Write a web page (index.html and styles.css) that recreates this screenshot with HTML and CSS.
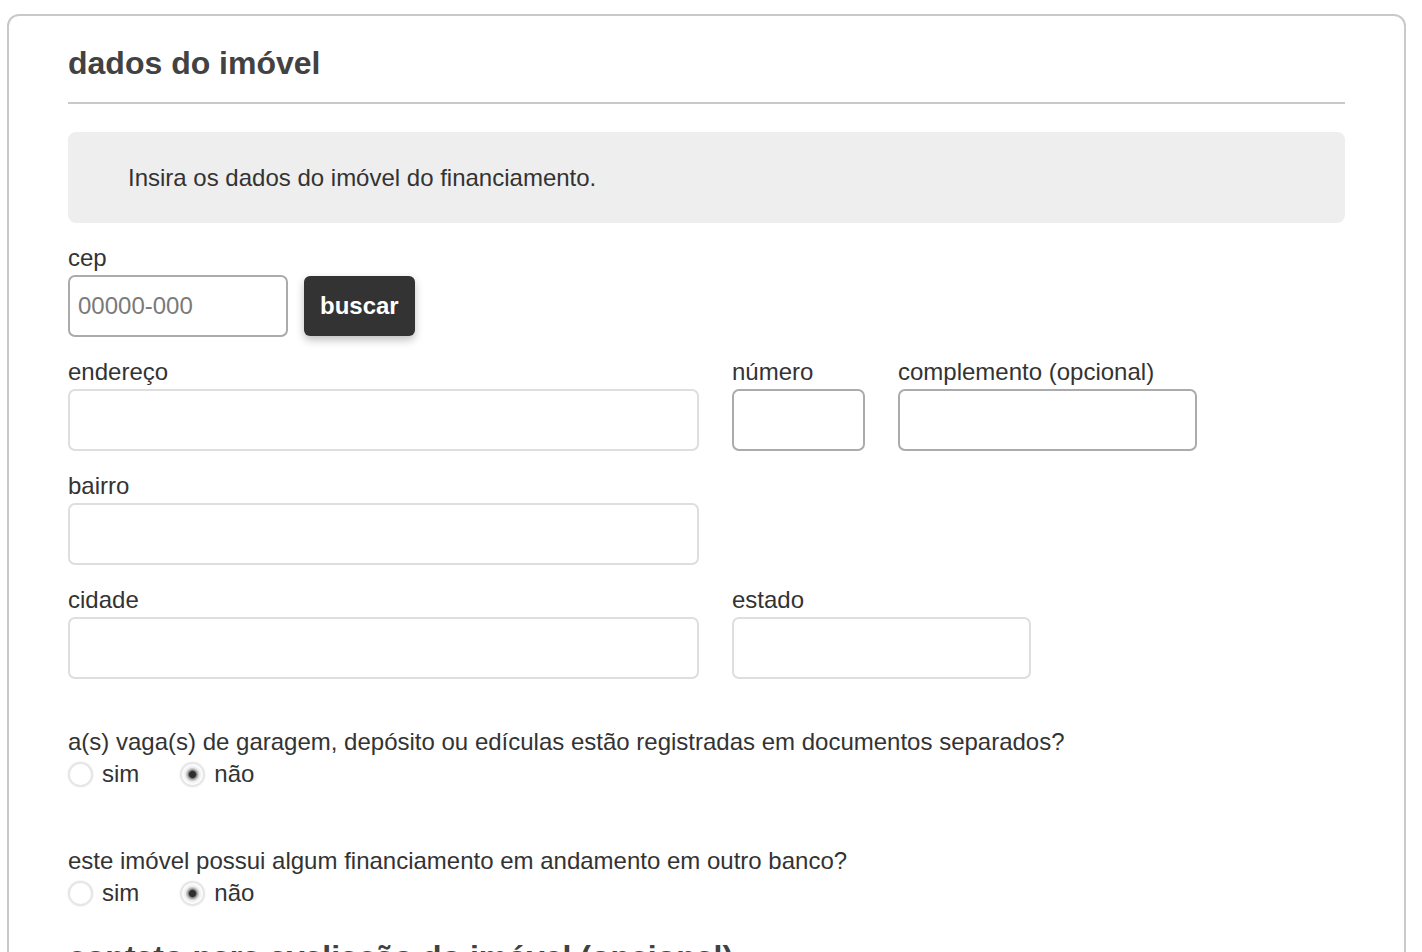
FILE: index.html
```html
<!DOCTYPE html>
<html lang="pt-BR">
<head>
<meta charset="utf-8">
<title>dados do imóvel</title>
<link rel="stylesheet" href="styles.css">
</head>
<body>
<div class="card">
  <h2 class="title">dados do imóvel</h2>
  <hr class="rule">
  <div class="info">Insira os dados do imóvel do financiamento.</div>

  <div class="fields">
    <div class="field">
      <label class="label" for="cep">cep</label>
      <div class="cep-row">
        <input id="cep" class="input input-dark w-cep" type="text" placeholder="00000-000">
        <button class="btn" type="button">buscar</button>
      </div>
    </div>

    <div class="row">
      <div class="field">
        <label class="label">endereço</label>
        <input class="input w-wide" type="text" disabled>
      </div>
      <div class="field">
        <label class="label">número</label>
        <input class="input input-dark w-num" type="text">
      </div>
      <div class="field">
        <label class="label">complemento (opcional)</label>
        <input class="input input-dark w-comp" type="text">
      </div>
    </div>

    <div class="row">
      <div class="field">
        <label class="label">bairro</label>
        <input class="input w-wide" type="text" disabled>
      </div>
    </div>

    <div class="row">
      <div class="field">
        <label class="label">cidade</label>
        <input class="input w-wide" type="text" disabled>
      </div>
      <div class="field">
        <label class="label">estado</label>
        <input class="input w-comp" type="text" disabled>
      </div>
    </div>
  </div>

  <div class="questions">
    <div class="question">
      <p class="q-text">a(s) vaga(s) de garagem, depósito ou edículas estão registradas em documentos separados?</p>
      <div class="radios">
        <label class="radio"><input type="radio" name="q1"><span>sim</span></label>
        <label class="radio"><input type="radio" name="q1" checked><span>não</span></label>
      </div>
    </div>
    <div class="question">
      <p class="q-text">este imóvel possui algum financiamento em andamento em outro banco?</p>
      <div class="radios">
        <label class="radio"><input type="radio" name="q2"><span>sim</span></label>
        <label class="radio"><input type="radio" name="q2" checked><span>não</span></label>
      </div>
    </div>
  </div>

  <h2 class="title title-next">contato para avaliação do imóvel (opcional)</h2>
</div>
</body>
</html>
```

FILE: styles.css
```css
* { box-sizing: border-box; }

html, body {
  margin: 0;
  padding: 0;
  background: #fff;
  overflow: hidden;
  height: 952px;
}

body {
  font-family: "Liberation Sans", Arial, Helvetica, sans-serif;
  color: #333;
}

.card {
  margin: 14px 16px 0 7px;
  border: 2px solid #c9c9c9;
  border-radius: 12px;
  padding: 29px 59px 40px 59px;
  height: 1100px;
}

.title {
  margin: 0;
  font-size: 32px;
  line-height: 37px;
  font-weight: 700;
  color: #424242;
}

.rule {
  margin: 20px 0 0 0;
  border: 0;
  height: 2px;
  background: #c9c9c9;
}

.info {
  margin-top: 28px;
  height: 91px;
  background: #eeeeee;
  border-radius: 8px;
  padding-left: 60px;
  display: flex;
  align-items: center;
  font-size: 24px;
  color: #333;
}

.fields {
  margin-top: 22px;
  display: flex;
  flex-direction: column;
  gap: 22px;
}

.row {
  display: flex;
  gap: 33px;
}

.field {
  display: flex;
  flex-direction: column;
}

.label {
  font-size: 24px;
  line-height: 26px;
  margin-bottom: 4px;
  color: #333;
}

.cep-row {
  display: flex;
  align-items: center;
  gap: 16px;
}

.input {
  height: 62px;
  border: 2px solid #dedede;
  border-radius: 7px;
  background: #fff;
  padding: 0 8px;
  font-family: "Liberation Sans", Arial, Helvetica, sans-serif;
  font-size: 24px;
  color: #333;
  outline: none;
}

.input-dark {
  border-color: #ababab;
}

.input::placeholder {
  color: #7a7a7a;
}

.w-cep { width: 220px; }
.w-wide { width: 631px; }
.w-num { width: 133px; }
.w-comp { width: 299px; }

.btn {
  height: 60px;
  padding: 0 16px;
  border: 0;
  border-radius: 6px;
  background: #333;
  color: #fff;
  font-family: "Liberation Sans", Arial, Helvetica, sans-serif;
  font-size: 24px;
  font-weight: 700;
  box-shadow: 0 4px 8px rgba(0, 0, 0, 0.25);
}

.questions {
  margin-top: 50px;
  display: flex;
  flex-direction: column;
  gap: 58px;
}

.q-text {
  margin: 0;
  font-size: 24px;
  line-height: 26px;
  color: #333;
}

.radios {
  margin-top: 3px;
  height: 32px;
  display: flex;
  align-items: center;
  gap: 41px;
}

.radio {
  display: flex;
  align-items: center;
  gap: 9px;
  font-size: 24px;
  color: #333;
}

.radio input {
  appearance: none;
  -webkit-appearance: none;
  margin: 0;
  width: 25px;
  height: 25px;
  border-radius: 50%;
  border: 2px solid #e6e6e6;
  background: #fff;
  box-shadow: 0 0 2px rgba(0, 0, 0, 0.12);
}

.radio input:checked {
  background: radial-gradient(circle, #2e2e2e 0, #2e2e2e 3px, #9a9a9a 4.5px, #ececec 7px, #fff 10px);
}

.title-next {
  margin-top: 30px;
}
```
